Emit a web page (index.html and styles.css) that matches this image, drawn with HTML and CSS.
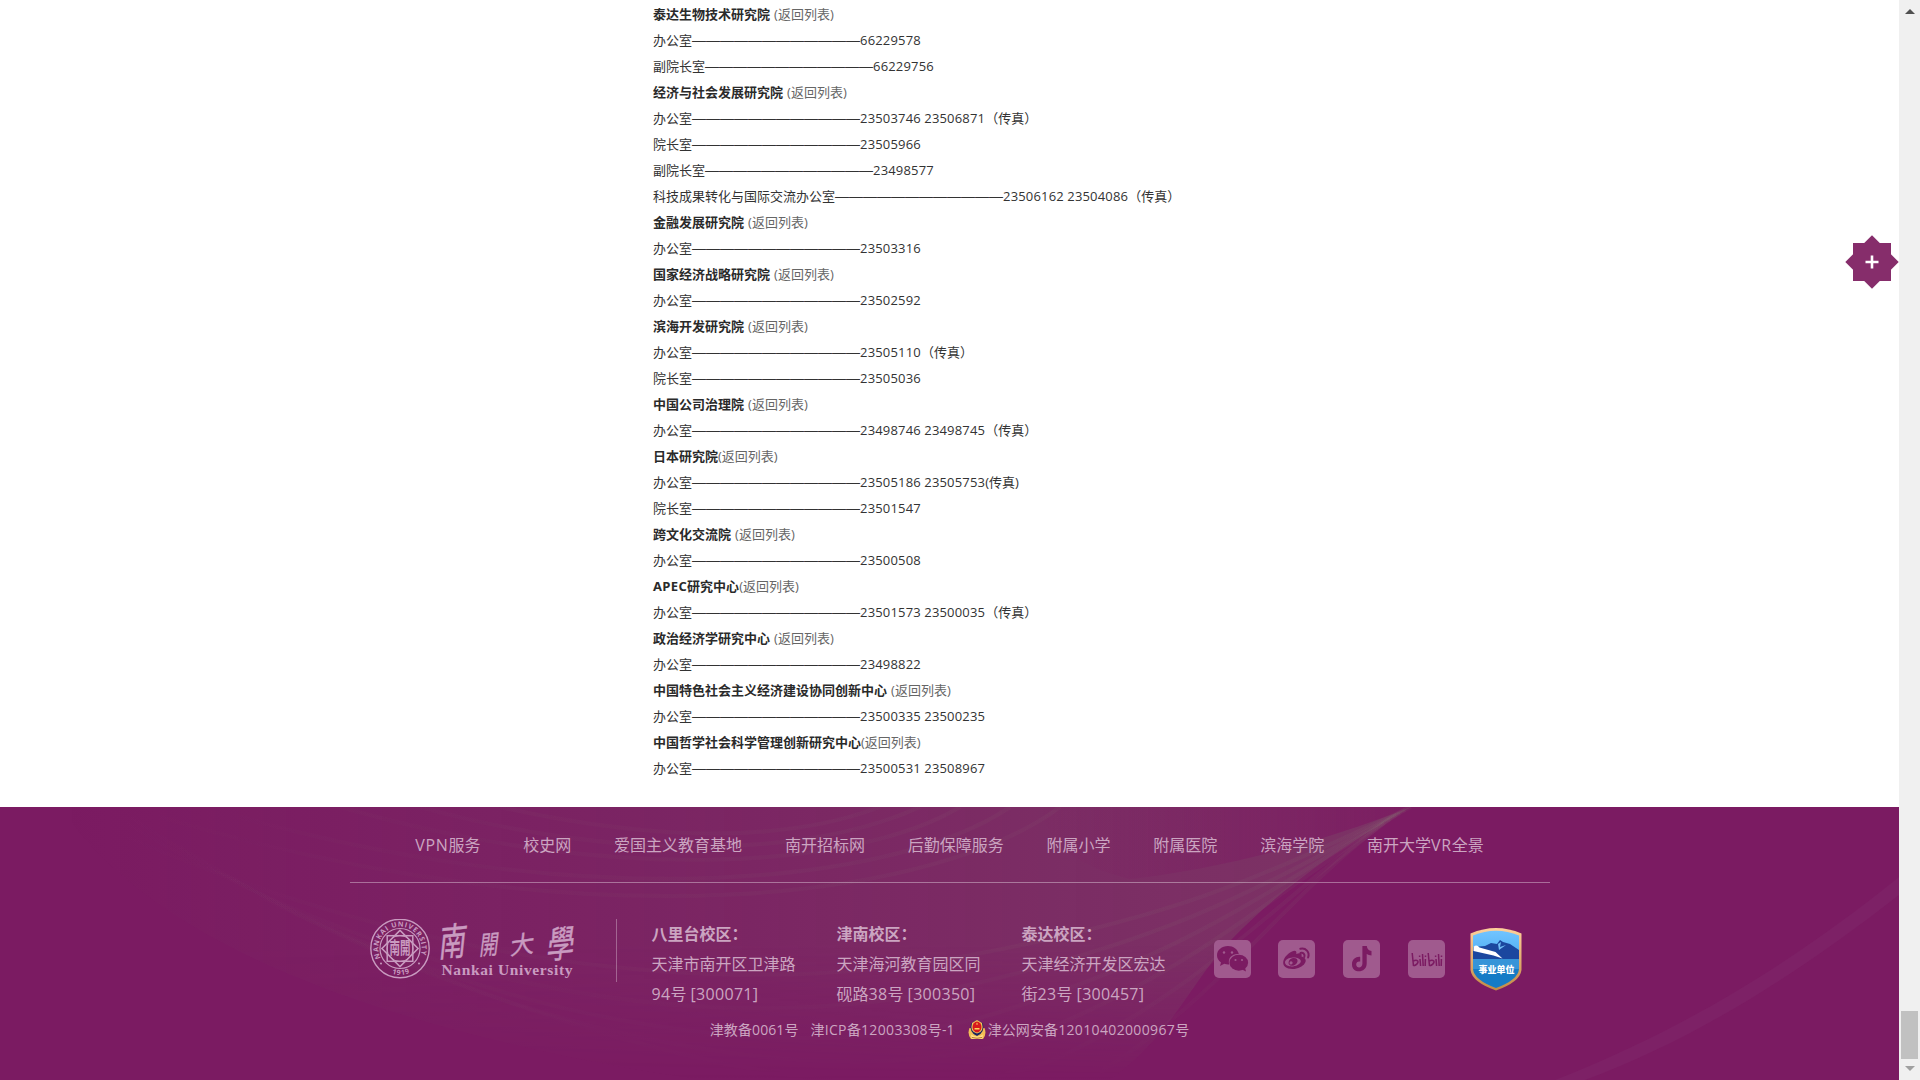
FILE: index.html
```html
<!DOCTYPE html>
<html lang="zh-CN">
<head>
<meta charset="utf-8">
<title>南开大学</title>
<link rel="stylesheet" href="styles.css">
</head>
<body>
<div class="page">
<main class="directory">
<p><b>泰达生物技术研究院</b> <a>(返回列表)</a></p>
<p>办公室<i>————————————</i><span>66229578</span></p>
<p>副院长室<i>————————————</i><span>66229756</span></p>
<p><b>经济与社会发展研究院</b> <a>(返回列表)</a></p>
<p>办公室<i>————————————</i><span>23503746 23506871</span>（传真）</p>
<p>院长室<i>————————————</i><span>23505966</span></p>
<p>副院长室<i>————————————</i><span>23498577</span></p>
<p>科技成果转化与国际交流办公室<i>————————————</i><span>23506162 23504086</span>（传真）</p>
<p><b>金融发展研究院</b> <a>(返回列表)</a></p>
<p>办公室<i>————————————</i><span>23503316</span></p>
<p><b>国家经济战略研究院</b> <a>(返回列表)</a></p>
<p>办公室<i>————————————</i><span>23502592</span></p>
<p><b>滨海开发研究院</b> <a>(返回列表)</a></p>
<p>办公室<i>————————————</i><span>23505110</span>（传真）</p>
<p>院长室<i>————————————</i><span>23505036</span></p>
<p><b>中国公司治理院</b> <a>(返回列表)</a></p>
<p>办公室<i>————————————</i><span>23498746 23498745</span>（传真）</p>
<p><b>日本研究院</b><a>(返回列表)</a></p>
<p>办公室<i>————————————</i><span>23505186 23505753</span>(传真)</p>
<p>院长室<i>————————————</i><span>23501547</span></p>
<p><b>跨文化交流院</b> <a>(返回列表)</a></p>
<p>办公室<i>————————————</i><span>23500508</span></p>
<p><b><span>APEC</span>研究中心</b><a>(返回列表)</a></p>
<p>办公室<i>————————————</i><span>23501573 23500035</span>（传真）</p>
<p><b>政治经济学研究中心</b> <a>(返回列表)</a></p>
<p>办公室<i>————————————</i><span>23498822</span></p>
<p><b>中国特色社会主义经济建设协同创新中心</b> <a>(返回列表)</a></p>
<p>办公室<i>————————————</i><span>23500335 23500235</span></p>
<p><b>中国哲学社会科学管理创新研究中心</b><a>(返回列表)</a></p>
<p>办公室<i>————————————</i><span>23500531 23508967</span></p>
</main>

<footer class="footer">
<svg class="waves" viewBox="0 0 1899 273" preserveAspectRatio="none">
<defs>
<linearGradient id="glow" x1="0" x2="1" y1="0" y2="0">
<stop offset="0" stop-color="#7f7f70" stop-opacity="0"/><stop offset=".45" stop-color="#7f7f70" stop-opacity=".1"/><stop offset=".8" stop-color="#7f7f70" stop-opacity=".2"/><stop offset="1" stop-color="#7f7f70" stop-opacity=".24"/>
</linearGradient>
<linearGradient id="thread" gradientUnits="userSpaceOnUse" x1="100" x2="1411" y1="0" y2="0"><stop offset="0" stop-color="#8b8b78" stop-opacity="0"/><stop offset=".5" stop-color="#8b8b78" stop-opacity=".6"/><stop offset="1" stop-color="#8b8b78"/></linearGradient>
<linearGradient id="fade" x1="0" x2="0" y1="0" y2="1"><stop offset="0" stop-color="#fff"/><stop offset=".5" stop-color="#fff"/><stop offset="1" stop-color="#000"/></linearGradient>
<linearGradient id="dark" x1="0" x2="1" y1="0" y2="0"><stop offset="0" stop-color="#7c1c62" stop-opacity="0"/><stop offset="1" stop-color="#7c1c62" stop-opacity=".9"/></linearGradient>
<mask id="m"><rect width="1899" height="273" fill="url(#fade)"/></mask>
</defs>
<g mask="url(#m)">
<path fill="url(#glow)" d="M60 0H1411C1330 45 1275 88 1232 132C1190 175 1175 225 1110 273H700C420 230 160 150 60 0Z"/>
<path fill="url(#dark)" d="M1040 0H1411C1320 36 1220 62 1130 72C1080 60 1050 40 1040 0Z"/>
<g class="lines">
<path d="M1411 0C1260 70 1180 110 960 150S420 170 60 0"/>
<path d="M1405 3C1260 80 1180 130 960 180S420 200 100 0"/>
<path d="M1400 6C1265 85 1190 145 1000 205S460 230 130 10"/>
<path d="M1396 8C1275 85 1200 160 1040 225S520 255 180 40"/>
<path d="M1390 12C1280 90 1210 175 1070 245S640 273 260 90"/>
<path d="M1384 16C1280 95 1220 190 1100 265"/>
<path d="M960 0C860 60 620 80 340 0"/>
<path d="M920 0C820 45 640 60 420 0"/>
<path d="M1010 0C900 75 600 110 240 10"/>
<path d="M880 0C800 30 680 40 500 0"/>
<path d="M1060 0C940 90 600 140 160 10"/>
</g>
</g>
<path class="streak" d="M1555 273C1690 220 1800 150 1899 70V88C1800 165 1700 230 1585 273Z"/>
</svg>
<div class="inner">
<nav class="links"><a><span>VPN</span>服务</a><a>校史网</a><a>爱国主义教育基地</a><a>南开招标网</a><a>后勤保障服务</a><a>附属小学</a><a>附属医院</a><a>滨海学院</a><a>南开大学<span>VR</span>全景</a></nav>
<div class="info">
<svg class="logo" width="210" height="64" viewBox="0 0 210 64">
<g class="seal">
<circle cx="30" cy="29.500" r="29.200" stroke-width="1.400"/>
<circle cx="30" cy="29.500" r="20" stroke-width="1.200"/>
<rect x="17.200" y="16.700" width="25.600" height="25.600" stroke-width="1.500"/>
<rect x="17.200" y="16.700" width="25.600" height="25.600" stroke-width="1.500" transform="rotate(45 30 29.500)"/>
<circle cx="30" cy="29.500" r="13" stroke-width="1"/>
</g>
<path id="arc" fill="none" d="M10.700 39A21.600 21.600 0 1 1 49.300 39"/>
<path id="low" fill="none" d="M16.500 52.200A26.600 26.600 0 0 0 43.500 52.200"/>
<g class="ink">
<text class="ring"><textPath href="#arc" textLength="84">NANKAI UNIVERSITY</textPath></text>
<text class="ring"><textPath href="#low" startOffset="6" textLength="18">1919</textPath></text>
<circle cx="11" cy="44.500" r="1"/><circle cx="49" cy="44.500" r="1"/>
<text class="core" transform="translate(19.500 35) scale(.75 1.200)">南開</text>
<g class="brush">
<text transform="translate(68 38) rotate(-6) skewX(-12) scale(.84 1.150)" font-size="33">南</text>
<text transform="translate(109 36) rotate(-5) skewX(-12) scale(.72 1)" font-size="26">開</text>
<text transform="translate(140 36) rotate(-8) skewX(-12)" font-size="24">大</text>
<text transform="translate(176 40) rotate(-6) skewX(-12) scale(.84 1.120)" font-size="33">學</text>
</g>
<text class="latin" x="71.500" y="56" textLength="131">Nankai University</text>
</g>
</svg>
<div class="campuses">
<div><b>八里台校区：</b><br>天津市南开区卫津路<br><span>94</span>号 <span>[300071]</span></div>
<div><b>津南校区：</b><br>天津海河教育园区同<br>砚路<span>38</span>号 <span>[300350]</span></div>
<div><b>泰达校区：</b><br>天津经济开发区宏达<br>街<span>23</span>号 <span>[300457]</span></div>
</div>
<div class="social">
<svg width="37" height="38" viewBox="0 0 37 38"><rect class="tile" width="37" height="38" rx="5"/>
<path class="mark" d="M14 6C7.800 6 3 10 3 15.300c0 3 1.500 5.500 4 7.200L6 26l4.300-2.200c1.600.5 3 .7 5 .6-2.300-7 4-11.200 9.500-10.400C23.800 9.200 19.300 6 14 6Z"/><ellipse class="mark" cx="24.800" cy="22.700" rx="9.300" ry="8"/><path class="mark" d="M27 29l5 2.500-1-4Z"/>
<g class="eye"><circle cx="10" cy="12.500" r="1.200"/><circle cx="18" cy="12.500" r="1.200"/><circle cx="21.500" cy="20" r="1.100"/><circle cx="28" cy="20" r="1.100"/></g></svg>
<svg width="37" height="38" viewBox="0 0 37 38"><rect class="tile" width="37" height="38" rx="5"/>
<path class="mark" fill-rule="evenodd" d="M14 11.500c3-1.600 5-.7 4.300 2.400 4-1.400 6.200-.4 5.200 2.600 9 2.200 2.500 12.500-9 12.500C1.500 29 3 17 14 11.500ZM15 17.500c-5 .2-8.300 2.800-8 5.300.3 2.600 4 4 8 3.600 4.600-.4 8-3 7.800-5.300-.3-2.600-4-3.800-7.800-3.600Z"/><path class="mark" fill-rule="evenodd" d="M15 18c3.500-.3 5 1.400 4.500 3.500-.5 2.400-3 4.200-5.500 4.200-2.700 0-4-1.700-3.300-4 .5-2 2.200-3.500 4.300-3.700Zm-2 3.300a1.600 1.600 0 1 0 .1 3.200 1.600 1.600 0 0 0-.1-3.200Z"/><path class="wave" d="M22.500 13c2.800-.7 4.700 1.500 3.800 4M22.300 8.800c5.500-1.300 9.700 3.200 7.800 8.700"/></svg>
<svg width="37" height="38" viewBox="0 0 37 38"><rect class="tile" width="37" height="38" rx="5"/>
<path class="mark" d="M19.400 6h4.400c.3 3 2 4.600 4.700 5v4.600c-1.900-.1-3.500-.6-4.800-1.500v9.500c0 10-14.700 10.400-14.700.8 0-5.200 4-8 8.200-7.500v4.700c-2.200-.6-4 .7-4 2.900 0 4.200 6.200 4 6.200-.7Z"/></svg>
<svg class="bili" width="37" height="38" viewBox="0 0 37 38"><rect class="tile" width="37" height="38" rx="5"/>
<g class="wire"><path d="M4.200 13l1.300 13M20.200 13l1.300 13"/><path d="M5.200 21c3-1.500 5.300-.5 4.800 1.300-.4 1.600-2.400 3-4.500 3.600M21.200 21c3-1.500 5.300-.5 4.800 1.300-.4 1.600-2.400 3-4.500 3.600"/><path d="M12 19l.6 7M14.500 14l.7 12M17.400 19l-.2 7M28 19l.6 7M30.500 14l.7 12M33.400 19l-.2 7M11.600 15.500v1.500M17.500 15.500v1.500M27.600 15.500v1.500M33.500 15.500v1.500"/></g></svg>
<svg class="shield" width="52" height="64" viewBox="0 0 52 64">
<defs><linearGradient id="gold" x1="0" y1="0" x2="0" y2="1"><stop stop-color="#ffd09b"/><stop offset="1" stop-color="#c28a45"/></linearGradient><linearGradient id="sky" x1="0" y1="0" x2="0" y2="1"><stop stop-color="#72c4ff"/><stop offset="1" stop-color="#4bacf2"/></linearGradient></defs>
<path fill="url(#gold)" d="M.5 6.500Q26-4.500 51.500 6.500V43Q50 55 26 63.500Q2 55 .5 43Z"/>
<path fill="url(#sky)" d="M3 8.500Q26-1 49 8.500V32H3Z"/>
<path fill="#1b479f" d="M3 20l12-1 6-3 6 1 3-4 3 2 7 2 9 6v9H3Z"/>
<path fill="#71bdf5" d="M28 17l3-2-1 5 6-2-7 5Z"/>
<path fill="#fff" d="M3.500 20q3-3 6 .5l16 4.500 7 6.500-9-3L3.500 24Z"/>
<path fill="#3694d8" d="M3 32H49V42H3Z"/>
<path fill="#157bc6" d="M3 42H49Q48 53 26 61Q4 53 3 42Z"/>
<text x="8.500" y="46" textLength="36">事业单位</text>
</svg>
</div>
</div>
<div class="records"><a>津教备0061号</a><a>津<span>ICP</span>备<span>12003308</span>号-1</a><a class="police"><svg width="18" height="20" viewBox="0 0 18 20"><path fill="#f1bf55" d="M1.500 8Q-1 14 3 19H15Q19 14 16.500 8Z"/><path fill="#18235f" d="M9 .5L15 3.500Q17 13 9 16Q1 13 3 3.500Z"/><path fill="#f3c45d" d="M9 0L14 3Q16.500 12 9 13.500Q1.500 12 4 3Z"/><ellipse cx="9" cy="7" rx="4.500" ry="5.400" fill="#d9191d"/><path fill="#ffd35b" d="M9 2.500l1 2H8ZM6.500 8h5v1.500h-5Z"/><path fill="#ffe08a" d="M3 14.500q6 4 12 0l-1 4.500H4Z"/><path stroke="#b8742a" fill="none" d="M4 17.500q5 1.500 10 0"/></svg><em>津公网安备<span>12010402000967</span>号</em></a></div>
</div>
</footer>
<svg class="plus" width="54" height="54" viewBox="-27 -27 54 54"><path d="M-19-19H19V19H-19Z"/><path d="M0-26.700L26.700 0 0 26.700-26.700 0Z"/><path class="sign" d="M-6.500 0H6.500M0-6.500V6.500"/></svg>
</div>
<aside class="scrollbar"><i class="arrow up"></i><i class="thumb"></i><i class="arrow down"></i></aside>
</body>
</html>
```
FILE: styles.css
```css
* { box-sizing: border-box; }
body { margin: 0; height: 1080px; overflow: hidden; display: grid; grid-template-columns: 1fr 21px; background: #fff; color: #333; font-family: "Open Sans", "Noto Sans CJK SC", sans-serif; }
.page { position: relative; display: flex; flex-direction: column; height: 1080px; }
.directory { flex: 1; padding: 1px 0 0 653px; font-size: 13px; }
.directory p { margin: 0; height: 26px; line-height: 26px; white-space: nowrap; word-spacing: .7px; }
.directory b { color: #2a2a2a; }
.directory b span { letter-spacing: .35px; }
.directory a { color: #666; }
.directory i { font: normal 14px/1 "Liberation Sans", sans-serif; }
.directory span { letter-spacing: .18px; word-spacing: -.2px; }
.footer { position: relative; height: 273px; background: #7b1b62; color: #cba5c1; }
.waves { position: absolute; inset: 0; width: 100%; height: 100%; }
.lines path { fill: none; stroke: url(#thread); stroke-width: 4; opacity: .08; }
.streak { fill: #9a789a; opacity: .07; }
.inner { position: relative; width: 1200px; margin: 0 auto; }
.links { height: 76px; border-bottom: 1px solid rgba(255, 255, 255, .36); display: flex; justify-content: center; gap: 42.8px; font-size: 16px; line-height: 77px; white-space: nowrap; }
.links span { letter-spacing: .7px; }
.info { display: flex; align-items: flex-start; height: 128px; padding: 36px 0 0 20px; }
.logo { flex: none; margin-right: 36px; }
.seal { fill: none; stroke: #c99bc0; }
.ink { fill: #c99bc0; }
.ring { font: bold 7px "Open Sans", sans-serif; }
.core { font: bold 14px "Noto Sans CJK SC", sans-serif; }
.brush { font-family: "Liberation Serif", "Noto Sans CJK TC", serif; stroke: #c99bc0; stroke-width: .4; }
.latin { font: bold 15.500px "Liberation Serif", serif; }
.campuses { display: flex; flex: none; height: 63px; border-left: 1px solid rgba(255, 255, 255, .3); padding-left: 35px; font-size: 16px; line-height: 30px; white-space: nowrap; }
.campuses div { width: 185px; }
.campuses span { letter-spacing: .3px; }
.social { display: flex; gap: 27.5px; padding: 21px 0 0 7.2px; }
.social svg { flex: none; }
.tile { fill: #a05a8e; }
.mark { fill: #7b1b62; }
.eye { fill: #a05a8e; }
.wave { fill: none; stroke: #7b1b62; stroke-width: 2; stroke-linecap: round; }
.wire { fill: none; stroke: #7b1b62; stroke-width: 1.5; }
.bili { margin-left: 1px; }
.shield { margin: -13px 0 0 -3px; }
.shield text { fill: #fff; font: 900 9px "Noto Sans CJK SC", sans-serif; }
.records { display: flex; justify-content: center; gap: 12px; height: 38px; line-height: 38px; font-size: 14px; letter-spacing: .1px; white-space: nowrap; }
.records span { letter-spacing: .35px; }
.records em { font-style: normal; }
.police { display: flex; align-items: center; gap: 2px; padding-left: 1px; }
.plus { position: absolute; left: 1845px; top: 235px; fill: #862d6b; }
.sign { stroke: #fff; stroke-width: 2.6; }
.scrollbar { height: 1080px; background: #f0f0f0; display: flex; flex-direction: column; align-items: center; padding: 9px 0 9px; }
.arrow { border: 5px solid transparent; border-top-width: 0; }
.up { border-bottom: 5px solid #505050; }
.down { border-top: 5px solid #a0a0a0; border-bottom-width: 0; margin-top: 7px; }
.thumb { width: 17px; height: 48px; margin-top: auto; background: #c1c1c1; }
```
